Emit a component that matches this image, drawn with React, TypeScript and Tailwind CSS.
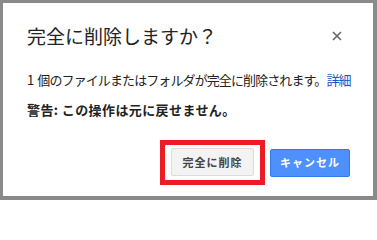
export default function App() {
  return (
    <div className="w-[377px] h-[200px] bg-[#8a8a8a] pl-[3px] pt-[3px] pr-[4px] pb-[4px] font-['Noto_Sans_CJK_JP',sans-serif]">
      <div className="w-full h-full bg-white pl-[24px] pr-[23px] pt-[21px]">
        {/* Title */}
        <div className="flex items-center justify-between h-[24px]">
          <h1 className="text-[19px] leading-[24px] text-[#222] font-normal">
            完全に削除しますか？
          </h1>
          <button className="mr-[8px] text-[#666]" aria-label="閉じる">
            <svg width="10" height="10" viewBox="0 0 10 10">
              <path d="M1 1L9 9M9 1L1 9" stroke="currentColor" strokeWidth="1.6" />
            </svg>
          </button>
        </div>

        {/* Body */}
        <p className="mt-[23px] text-[13px] leading-[18px] text-[#222] tracking-[-0.9px] whitespace-nowrap">
          1&nbsp;&nbsp;個のファイルまたはフォルダが完全に削除されます。
          <a className="text-[#15c]">詳細</a>
        </p>
        <p className="mt-[12px] text-[13px] leading-[18px] text-[#222] font-bold tracking-[0.4px] whitespace-nowrap">
          警告: この操作は元に戻せません。
        </p>

        {/* Actions */}
        <div className="mt-[21px] flex justify-end items-center gap-[5px]">
          <div className="border-[5px] border-[#ed1c24] pl-[6px] pr-[6px] pt-[3px] pb-[4px]">
            <button className="w-[83px] h-[28px] rounded-[2px] border border-[#dcdcdc] bg-[#f3f3f3] text-[11px] font-bold text-[#444] tracking-[1px]">
              完全に削除
            </button>
          </div>
          <button className="w-[80px] h-[28px] rounded-[2px] border border-[#3079ed] bg-[#4d90fe] text-[11px] font-bold text-white tracking-[1px]">
            キャンセル
          </button>
        </div>
      </div>
    </div>
  );
}
